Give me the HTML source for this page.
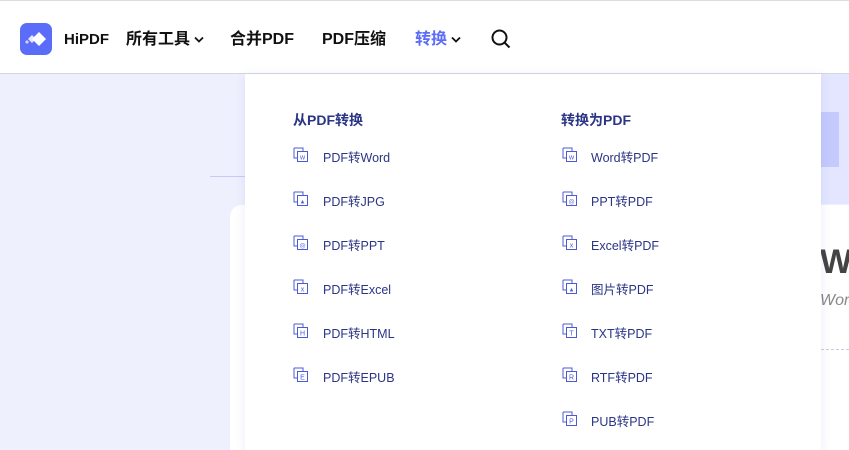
<!DOCTYPE html>
<html><head><meta charset="utf-8"><style>
*{margin:0;padding:0;box-sizing:border-box}
html,body{width:849px;height:450px;overflow:hidden}
body{background:#eff0fd;font-family:"Liberation Sans","Noto Sans CJK SC",sans-serif;position:relative}
.hdr{position:absolute;left:0;top:0;width:849px;height:74px;background:#fff;border-top:1px solid #ddd;border-bottom:1px solid #d4d6e4}
.logo{position:absolute;left:20px;top:22px;width:32px;height:32px;border-radius:7px;background:#5b6cf9}
.nav{position:absolute;top:28px;line-height:22px;font-size:16px;font-weight:bold;color:#111;white-space:nowrap}
.card{position:absolute;left:230px;top:205px;width:640px;height:260px;background:#fff;border-radius:12px}
.line{position:absolute;left:210px;top:176px;width:50px;height:1px;background:#c6cbf5}
.panel{position:absolute;left:245px;top:74px;width:576px;height:376px;background:#fff;box-shadow:0 2px 10px rgba(90,100,200,.12)}
.h{position:absolute;top:110px;font-size:14px;font-weight:bold;color:#2b3585}
.it{position:absolute;font-size:12.5px;color:#2b3585;white-space:nowrap}
.ic{position:absolute;width:16px;height:16px}
.deco{position:absolute;left:821px;top:74px;width:28px;height:130px;background:#e3e6fe}
.chev{display:inline-block;vertical-align:middle;margin-left:4px}
</style></head><body>
<div class="deco"></div>
<div style="position:absolute;left:821px;top:112px;width:18px;height:55px;background:#c4cafc"></div>
<div class="line"></div>
<div class="card"></div>
<div style="position:absolute;left:820px;top:243px;font-size:34px;font-weight:bold;color:#444">W</div>
<div style="position:absolute;left:820px;top:292px;font-size:16px;font-style:italic;color:#888">Wor</div>
<div style="position:absolute;left:821px;top:349px;width:28px;border-top:1px dashed #ccd"></div>
<div class="hdr">
<div class="logo"><svg width="32" height="32" viewBox="0 0 32 32"><path d="M19 9l7 7-7 7-7-7z" fill="#fff"/><path d="M12 12l4 4-4 4-4-4z" fill="#fff" opacity=".85"/><path d="M7 17l2 2-2 2-2-2z" fill="#fff" opacity=".7"/></svg></div>
<div class="nav" style="left:64px;font-size:15px">HiPDF</div>
<div class="nav" style="left:126px">所有工具<svg class="chev" width="10" height="7" viewBox="0 0 10 7"><path d="M1 1.5l4 4 4-4" fill="none" stroke="#111" stroke-width="1.8"/></svg></div>
<div class="nav" style="left:230px">合并PDF</div>
<div class="nav" style="left:322px">PDF压缩</div>
<div class="nav" style="left:415px;color:#5b6cf9">转换<svg class="chev" width="10" height="7" viewBox="0 0 10 7"><path d="M1 1.5l4 4 4-4" fill="none" stroke="#111" stroke-width="1.8"/></svg></div>
<svg style="position:absolute;left:490px;top:27px" width="22" height="22" viewBox="0 0 22 22"><circle cx="9.5" cy="9.5" r="7" fill="none" stroke="#111" stroke-width="2"/><path d="M14.5 14.5l5 5" stroke="#111" stroke-width="2"/></svg>
</div>
<div class="panel"></div>
<div class="h" style="left:293px">从PDF转换</div>
<div class="h" style="left:561px">转换为PDF</div>
<div id="items"></div>
<script>
var L=["PDF转Word","PDF转JPG","PDF转PPT","PDF转Excel","PDF转HTML","PDF转EPUB"],R=["Word转PDF","PPT转PDF","Excel转PDF","图片转PDF","TXT转PDF","RTF转PDF","PUB转PDF"];
var h="";function add(arr,ix,tx,gl){arr.forEach(function(t,i){var y=147+i*44;h+='<svg class="ic" style="left:'+ix+'px;top:'+y+'px" viewBox="0 0 16 16"><path d="M1 1h9v3M1 1v10h3" fill="none" stroke="#4b5bd6" stroke-width="1"/><rect x="4.5" y="4.5" width="10" height="10" fill="#fff" stroke="#4b5bd6"/><text x="9.5" y="12.5" font-size="7" text-anchor="middle" fill="#4b5bd6" font-family="Liberation Sans">'+gl[i]+'</text></svg><div class="it" style="left:'+tx+'px;top:'+y+'px">'+t+'</div>';});}
add(L,293,323,["w","▴","◎","x","H","E"]);add(R,562,591,["w","◎","x","▴","T","R","P"]);
document.getElementById("items").innerHTML=h;
</script>
</body></html>
